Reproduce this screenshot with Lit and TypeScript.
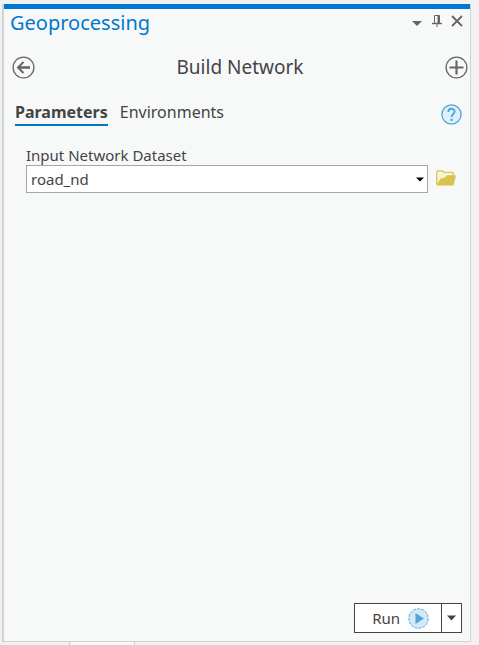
import { LitElement, html, css } from "lit";
import { customElement, state } from "lit/decorators.js";

type Tab = "Parameters" | "Environments";

@customElement("app-root")
export class AppRoot extends LitElement {
  @state() private tab: Tab = "Parameters";

  static styles = css`
    * {
      box-sizing: border-box;
    }
    :host {
      box-sizing: border-box;
      display: flex;
      flex-direction: column;
      min-height: 100vh;
      padding: 4px 8px 0 2px;
      background: #f1f1f1;
      color: #444;
      font: 15px/20px "Noto Sans", "Open Sans", sans-serif;
    }
    button,
    select {
      font: inherit;
      color: inherit;
      margin: 0;
      padding: 0;
      border: 0;
      background: none;
    }
    svg {
      display: block;
    }
    .panel {
      flex: 1;
      display: flex;
      flex-direction: column;
      background: #f7f9f9;
      border: solid #d2d2d2;
      border-width: 0 1px 1px 2px;
    }
    .accent {
      height: 5px;
      background: #0078d0;
    }
    .titlebar {
      display: flex;
      justify-content: space-between;
      height: 35px;
      padding: 0 7px 0 6px;
    }
    .title {
      margin: 0;
      font-size: 20px;
      line-height: 28px;
      font-weight: 400;
      color: #0078d0;
    }
    .window {
      display: flex;
      align-items: center;
      height: 23px;
      gap: 8px;
    }
    .heading {
      display: flex;
      align-items: center;
      height: 46px;
      padding: 0 2px 0 8px;
    }
    .tool {
      flex: 1;
      margin: 0;
      text-align: center;
      font-size: 19px;
      line-height: 28px;
      font-weight: 400;
    }
    .tabs {
      display: flex;
      align-items: flex-start;
      height: 46px;
      padding: 9px 8px 0 11px;
      gap: 12px;
    }
    .tab {
      height: 27px;
      font-size: 16px;
      line-height: 24px;
      border-bottom: 2px solid transparent;
    }
    .tab.active {
      font-weight: 700;
      border-color: #0078c0;
    }
    .help {
      margin: 5px 0 0 auto;
    }
    .form {
      flex: 1;
      padding: 9px 14px 0 22px;
    }
    .label {
      display: block;
    }
    .row {
      display: flex;
      align-items: center;
      gap: 8px;
    }
    .combo {
      flex: 1;
      display: grid;
      align-items: center;
    }
    .combo > * {
      grid-area: 1 / 1;
    }
    .select {
      appearance: none;
      width: 100%;
      height: 28px;
      padding: 0 20px 0 4px;
      background: #fff;
      border: 1px solid #a6a6a6;
    }
    .caret {
      justify-self: end;
      margin-right: 4px;
      pointer-events: none;
    }
    .browse {
      padding-bottom: 3px;
    }
    .footer {
      display: flex;
      justify-content: flex-end;
      padding: 0 8px 8px;
    }
    .split {
      display: flex;
      height: 30px;
      background: #fff;
      border: 1px solid #444;
    }
    .run {
      display: flex;
      align-items: center;
      gap: 8px;
      padding: 0 12px 0 17px;
    }
    .more {
      width: 20px;
      display: grid;
      place-items: center;
      border-left: 1px solid #444;
    }
    .dock {
      height: 3px;
      padding-left: 67px;
    }
    .docked {
      width: 66px;
      height: 3px;
      background: #f7f9f9;
      border: solid #c8c8c8;
      border-width: 0 1px;
    }
  `;

  private renderTab(name: Tab) {
    const active = this.tab === name;
    return html`<button
      class="tab ${active ? "active" : ""}"
      role="tab"
      aria-selected=${active}
      @click=${() => (this.tab = name)}
    >${name}</button>`;
  }

  render() {
    return html`
      <main class="panel">
        <div class="accent"></div>
        <header class="titlebar">
          <h1 class="title">Geoprocessing</h1>
          <div class="window">
            <button aria-label="Window menu">
              <svg width="12" height="14" viewBox="0 0 12 14"><path d="M1 7h10L6 12z" fill="#666" /></svg>
            </button>
            <button aria-label="Auto hide">
              <svg width="12" height="14" viewBox="0 0 12 14" fill="none" stroke="#666">
                <path d="M3.500 9V1.500h5V9M6 10v3" /><path d="M1 9.500h10" stroke-width="1.400" /><path d="M7.500 2v7" stroke-width="2" />
              </svg>
            </button>
            <button aria-label="Close">
              <svg width="12" height="14" viewBox="0 0 12 14"><path d="M1 2l10 10M11 2L1 12" stroke="#666" stroke-width="1.800" /></svg>
            </button>
          </div>
        </header>

        <div class="heading">
          <button aria-label="Back">
            <svg width="23" height="23" viewBox="0 0 23 23" fill="none" stroke="#666">
              <circle cx="11.500" cy="11.500" r="10.400" stroke-width="1.300" />
              <path d="M18 11.500H7" stroke-width="2.600" />
              <path d="M11.500 6L6 11.500l5.500 5.500" stroke-width="2" />
            </svg>
          </button>
          <h2 class="tool">Build Network</h2>
          <button aria-label="Add">
            <svg width="23" height="23" viewBox="0 0 23 23" fill="none" stroke="#666">
              <circle cx="11.500" cy="11.500" r="10.400" stroke-width="1.300" />
              <path d="M11.500 4.500v14M4.500 11.500h14" stroke-width="2.200" />
            </svg>
          </button>
        </div>

        <div class="tabs" role="tablist">
          ${this.renderTab("Parameters")} ${this.renderTab("Environments")}
          <button class="help" aria-label="Help">
            <svg width="21" height="21" viewBox="0 0 21 21" fill="none" stroke="#4fa6dc">
              <circle cx="10.500" cy="10.500" r="9.600" fill="#e0f0fa" stroke-width="1.300" />
              <path d="M7.300 8C7.300 3.700 13.700 3.800 13.600 7.600C13.500 10 10.600 10 10.600 13" stroke-width="1.900" />
              <path d="M10.600 14.700v2.200" stroke-width="2.200" />
            </svg>
          </button>
        </div>

        <section class="form">
          <label class="label" for="dataset">Input Network Dataset</label>
          <div class="row">
            <div class="combo">
              <select class="select" id="dataset">
                <option>road_nd</option>
              </select>
              <svg class="caret" width="8" height="5" viewBox="0 0 8 5"><path d="M0 .5h8L4 4.500z" fill="#000" /></svg>
            </div>
            <button class="browse" aria-label="Browse">
              <svg width="20" height="16" viewBox="0 0 20 16">
                <path d="M.7 14V2L2 .8h4.500L8 2.300h8.500l.8 1V6" fill="#f7f4dc" stroke="#dcc64e" stroke-width="1.300" />
                <path d="M0 15.500L4.500 8.500L9 7.500L11 5.300h9L17.500 15.500z" fill="#d9c34a" />
              </svg>
            </button>
          </div>
        </section>

        <footer class="footer">
          <div class="split">
            <button class="run">
              <span>Run</span>
              <svg width="21" height="21" viewBox="0 0 21 21">
                <circle cx="10.500" cy="10.500" r="9.700" fill="#d3e9f7" stroke="#4fa6dc" stroke-dasharray="3 1" />
                <path d="M7.500 5l8.500 5.500l-8.500 5.500z" fill="#4fa6dc" />
              </svg>
            </button>
            <button class="more" aria-label="Run options">
              <svg width="9" height="6" viewBox="0 0 9 6"><path d="M0 .5h9L4.500 5.500z" fill="#444" /></svg>
            </button>
          </div>
        </footer>
      </main>
      <div class="dock"><div class="docked"></div></div>
    `;
  }
}
